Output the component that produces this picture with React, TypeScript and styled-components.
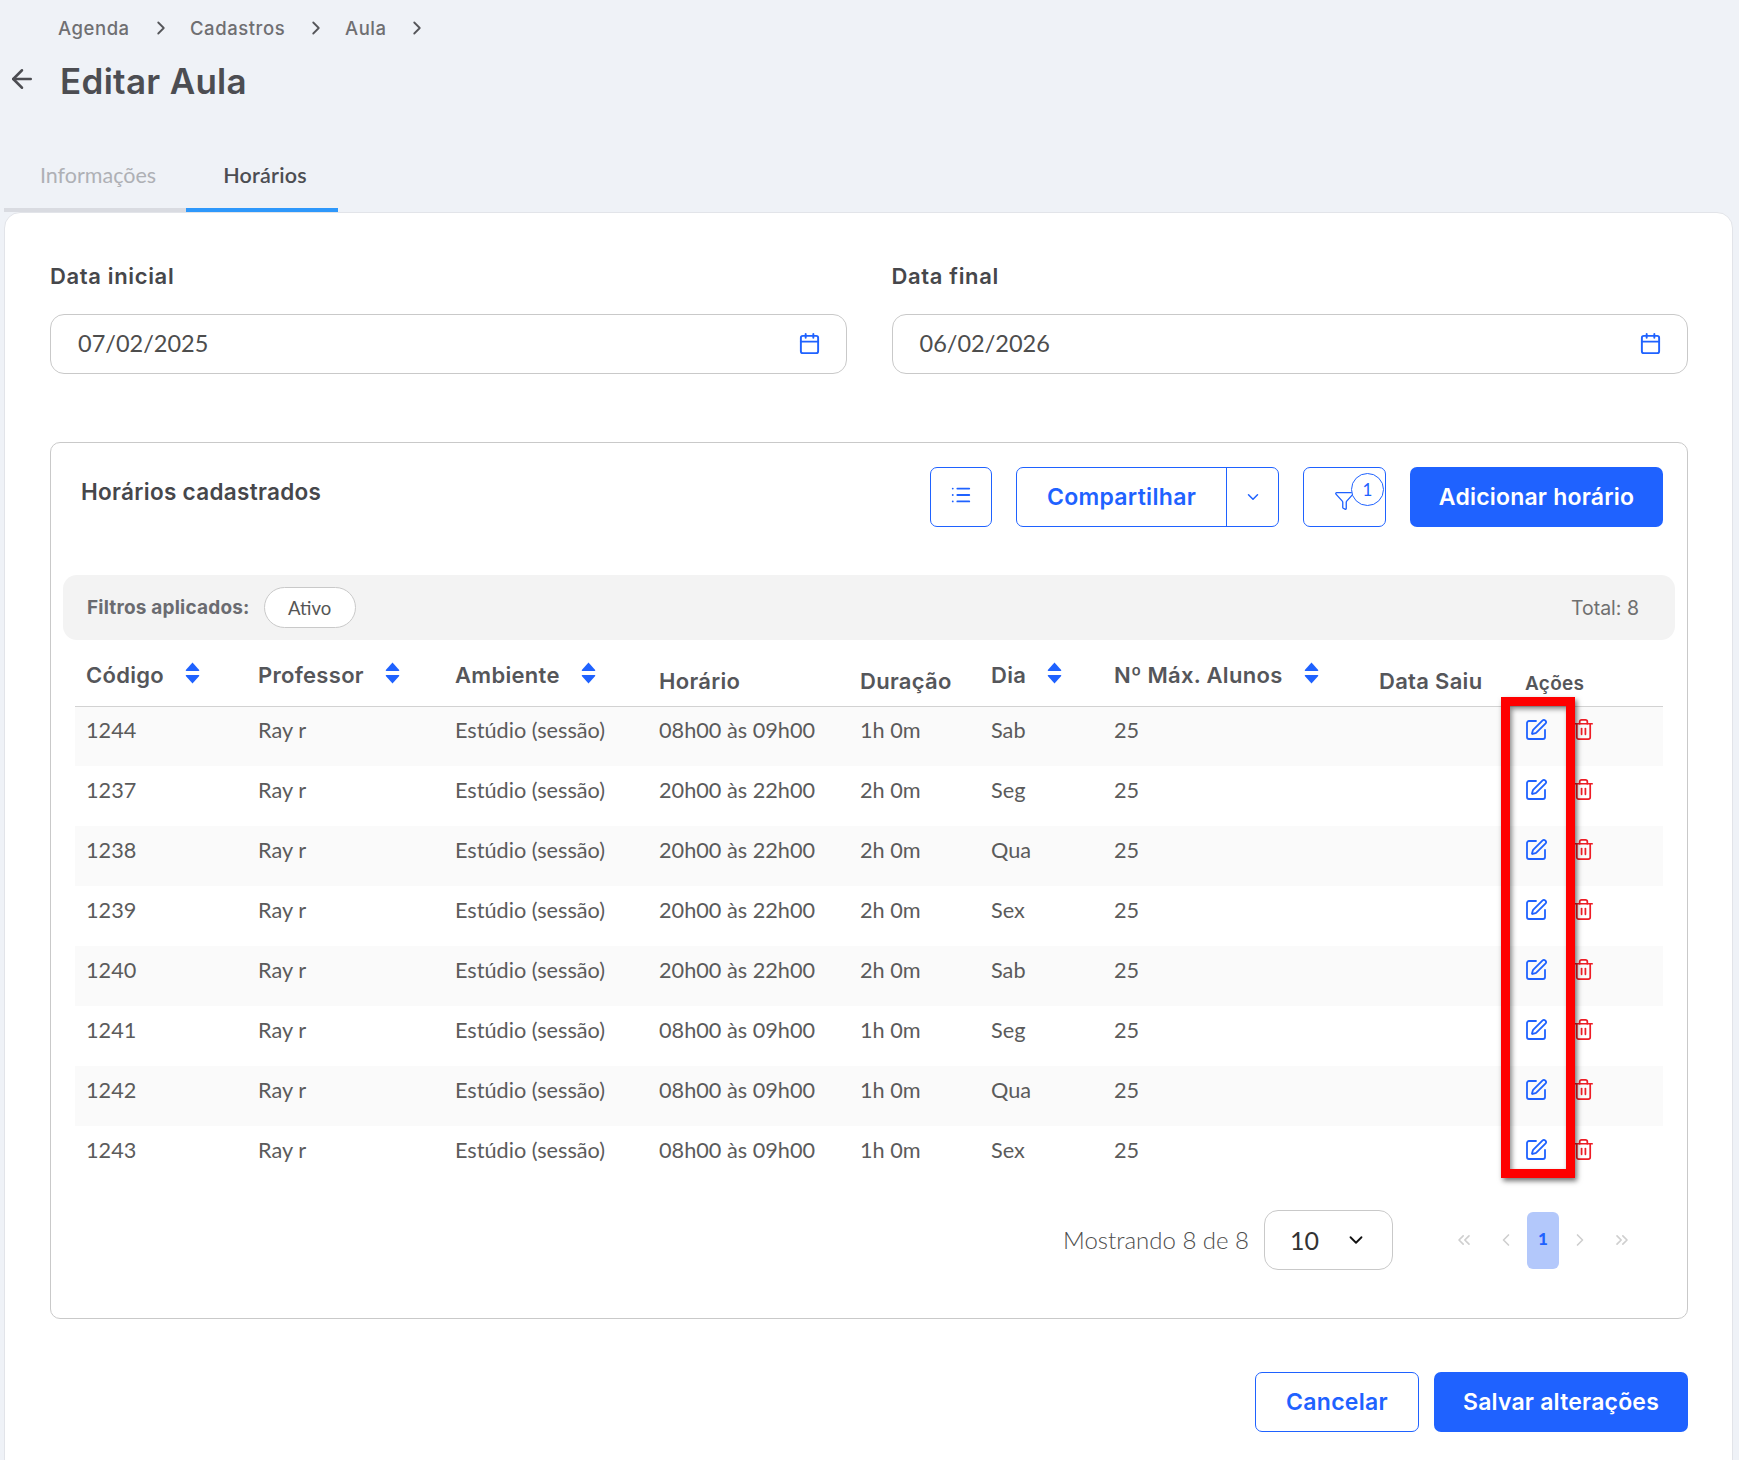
import React from 'react'
import styled, { createGlobalStyle } from 'styled-components'
import {
  ArrowLeft,
  Calendar,
  ChevronDown,
  ChevronLeft,
  ChevronRight,
  ChevronsLeft,
  ChevronsRight,
  Funnel,
  List,
  SquarePen,
  Trash2,
} from 'lucide-react'

const BLUE = '#1f62ff'
const HEAD_FONT = '"Inter", "Liberation Sans", sans-serif'
const BODY_FONT = '"Lato", "Liberation Sans", sans-serif'

const GlobalStyle = createGlobalStyle`
  * { box-sizing: border-box; }
  html, body { margin: 0; padding: 0; background: #eff2f7; }
  body { font-family: ${BODY_FONT}; }
`

const Page = styled.div`
  width: 1739px;
  height: 1460px;
  overflow: hidden;
  background: #eff2f7;
`

const Breadcrumb = styled.nav`
  display: flex;
  align-items: center;
  height: 28px;
  margin-top: 14px;
  padding-left: 58px;
  font-family: ${HEAD_FONT};
  font-size: 18.5px;
  font-weight: 500;
  letter-spacing: 0.55px;
  color: #6f6f72;
`

const Crumb = styled.span`
  display: inline-block;
  width: ${(p: { $w: number }) => p.$w}px;
`

const CrumbArrow = styled(ChevronRight)`
  width: 22px;
  height: 22px;
  margin-left: -6px;
  margin-right: 18px;
  color: #55565a;
`

const TitleRow = styled.div`
  display: flex;
  align-items: center;
  height: 44px;
  margin-top: 17px;
  padding-left: 7px;
`

const BackArrow = styled(ArrowLeft)`
  width: 30px;
  height: 30px;
  margin-top: -4px;
  margin-right: 23px;
  color: #4c4d52;
`

const Title = styled.h1`
  margin: 0;
  font-family: ${HEAD_FONT};
  font-size: 35px;
  font-weight: 600;
  letter-spacing: 0.3px;
  color: #4c4d52;
`

const Tabs = styled.div`
  display: flex;
  margin-top: 45px;
  margin-left: 4px;
  height: 64px;
`

const Tab = styled.div<{ $active?: boolean; $w: number }>`
  display: flex;
  align-items: center;
  justify-content: center;
  width: ${(p) => p.$w}px;
  padding: 0 0 6px 6px;
  font-size: 21.5px;
  font-weight: ${(p) => (p.$active ? 600 : 400)};
  letter-spacing: ${(p) => (p.$active ? 0.2 : 0)}px;
  color: ${(p) => (p.$active ? '#4c4d52' : '#aeb0b5')};
  border-bottom: 4px solid ${(p) => (p.$active ? '#2e98fb' : '#d9dbe1')};
`

const Card = styled.main`
  width: 1729px;
  height: 1300px;
  margin-left: 4px;
  padding: 50px 44px 0 45px;
  background: #fff;
  border: 1px solid #e2e4e9;
  border-radius: 16px 16px 0 0;
`

const DateGrid = styled.div`
  display: grid;
  grid-template-columns: 1fr 1fr;
  gap: 45px;
`

const Field = styled.div`
  display: flex;
  flex-direction: column;
`

const FieldLabel = styled.label`
  height: 28px;
  margin-bottom: 23px;
  font-family: ${HEAD_FONT};
  font-size: 22px;
  font-weight: 600;
  letter-spacing: 0.65px;
  line-height: 26px;
  color: #46474b;
`

const DateInput = styled.div`
  display: flex;
  align-items: center;
  justify-content: space-between;
  height: 60px;
  padding: 0 25px 2px 27px;
  border: 1px solid #c9c9c9;
  border-radius: 14px;
  font-size: 23.5px;
  color: #4d4d4d;
`

const CalendarIcon = styled(Calendar)`
  width: 23px;
  height: 23px;
  color: ${BLUE};
`

const Panel = styled.section`
  position: relative;
  display: flex;
  flex-direction: column;
  height: 877px;
  margin-top: 68px;
  border: 1px solid #c9c9c9;
  border-radius: 10px;
`

const Toolbar = styled.div`
  display: flex;
  align-items: flex-start;
  padding: 24px 24px 0 30px;
`

const PanelTitle = styled.h2`
  flex: 1;
  margin: 10px 0 0;
  font-family: ${HEAD_FONT};
  font-size: 22.5px;
  font-weight: 600;
  letter-spacing: 0.3px;
  line-height: 30px;
  color: #46474b;
`

const OutlineButton = styled.button<{ $w: number; $ml?: number }>`
  position: relative;
  display: flex;
  align-items: center;
  justify-content: center;
  width: ${(p) => p.$w}px;
  height: 60px;
  margin-left: ${(p) => p.$ml || 0}px;
  padding: 0;
  background: #fff;
  border: 1px solid ${BLUE};
  border-radius: 7px;
  color: ${BLUE};
  font-family: ${HEAD_FONT};
  font-size: 23px;
  font-weight: 600;
  letter-spacing: 0.3px;
`

const ListIcon = styled(List)`
  width: 22px;
  height: 22px;
  margin-top: -4px;
`

const SplitMain = styled.span`
  display: flex;
  align-items: center;
  justify-content: center;
  width: 210px;
  height: 100%;
  border-right: 1px solid ${BLUE};
`

const SplitCaret = styled.span`
  display: flex;
  align-items: center;
  justify-content: center;
  flex: 1;
`

const SmallChevron = styled(ChevronDown)`
  width: 18px;
  height: 18px;
`

const FunnelIcon = styled(Funnel)`
  width: 21px;
  height: 21px;
  margin-top: 6px;
  stroke-width: 1.5;
`

const FilterBadge = styled.span`
  position: absolute;
  top: 5px;
  right: 1px;
  display: flex;
  align-items: center;
  justify-content: center;
  width: 33px;
  height: 33px;
  background: #fff;
  border: 1px solid ${BLUE};
  border-radius: 50%;
  font-family: ${BODY_FONT};
  font-size: 17px;
  font-weight: 400;
`

const PrimaryButton = styled.button<{ $w: number; $ml: number }>`
  width: ${(p) => p.$w}px;
  height: 60px;
  margin-left: ${(p) => p.$ml}px;
  padding: 0;
  background: ${BLUE};
  border: 0;
  border-radius: 7px;
  color: #fff;
  font-family: ${HEAD_FONT};
  font-size: 23px;
  font-weight: 600;
  letter-spacing: 0.2px;
`

const FilterBar = styled.div`
  display: flex;
  align-items: center;
  height: 65px;
  margin: 48px 12px 0;
  padding: 0 36px 0 24px;
  background: #f3f3f3;
  border-radius: 14px;
`

const FilterLabel = styled.span`
  margin-right: 14px;
  font-family: ${HEAD_FONT};
  font-size: 19px;
  font-weight: 700;
  letter-spacing: 0.2px;
  color: #6a6b70;
`

const Chip = styled.span`
  display: flex;
  align-items: center;
  justify-content: center;
  width: 92px;
  height: 41px;
  background: #fff;
  border: 1px solid #c9c9c9;
  border-radius: 21px;
  font-size: 18.5px;
  color: #555;
`

const Total = styled.span`
  margin-left: auto;
  font-family: ${HEAD_FONT};
  font-size: 19.5px;
  color: #6f6f6f;
`

const Table = styled.table`
  width: 1588px;
  margin: 0 24px;
  table-layout: fixed;
  border-collapse: collapse;
`

const HeadRow = styled.tr`
  height: 66px;
  border-bottom: 1px solid #d2d2d2;
`

const Th = styled.th<{ $sorted?: boolean; $small?: boolean }>`
  padding: 0 0 ${(p) => (p.$sorted ? 17 : p.$small ? 8 : 11)}px 11px;
  vertical-align: bottom;
  text-align: left;
  font-family: ${HEAD_FONT};
  font-size: ${(p) => (p.$small ? 19 : 22)}px;
  font-weight: 600;
  letter-spacing: 0.3px;
  line-height: 28px;
  color: #55565a;
  white-space: nowrap;
`

const SortWrap = styled.span`
  display: inline-flex;
  align-items: center;
`

const SortSvg = styled.svg`
  width: 15px;
  height: 22px;
  margin-left: 21px;
  margin-top: -4px;
  fill: ${BLUE};
`

const Tr = styled.tr`
  height: 60px;
  &:nth-child(odd) {
    background: #fafafa;
  }
`

const Td = styled.td`
  padding: 0 0 13px 11px;
  font-size: 21.7px;
  font-weight: 400;
  color: #5b5b5b;
  white-space: nowrap;
`

const Actions = styled.div`
  display: flex;
  align-items: center;
  margin-left: -1px;
`

const EditIcon = styled(SquarePen)`
  width: 24px;
  height: 24px;
  color: ${BLUE};
  stroke-width: 1.8;
`

const TrashIcon = styled(Trash2)`
  width: 23px;
  height: 23px;
  margin-left: 24px;
  color: #ee1c25;
  stroke-width: 1.8;
`

const Highlight = styled.div`
  position: absolute;
  top: 254px;
  left: 1450px;
  width: 74px;
  height: 481px;
  border: 9px solid #fe0000;
  box-shadow: 2px 3px 5px rgba(0, 0, 0, 0.55), inset 2px 3px 5px rgba(0, 0, 0, 0.45);
  pointer-events: none;
`

const Pagination = styled.div`
  display: flex;
  align-items: flex-start;
  justify-content: flex-end;
  margin-top: 24px;
  padding-right: 44px;
`

const Showing = styled.span`
  margin-right: 15px;
  font-size: 24px;
  font-weight: 300;
  line-height: 60px;
  color: #4d4d4d;
`

const SizeSelect = styled.div`
  display: flex;
  align-items: center;
  justify-content: space-between;
  width: 129px;
  height: 60px;
  padding: 0 25px 0 25px;
  border: 1px solid #c9c9c9;
  border-radius: 14px;
  font-size: 25px;
  color: #333;
`

const Pager = styled.div`
  display: flex;
  align-items: center;
  height: 60px;
  margin-left: 50px;
`

const PageArrow = styled.span`
  display: flex;
  align-items: center;
  justify-content: center;
  width: 42px;
  color: #cfcfcf;
`

const PageCurrent = styled.span`
  display: flex;
  align-items: center;
  justify-content: center;
  width: 32px;
  height: 57px;
  padding-bottom: 4px;
  background: #b3c8fb;
  border-radius: 6px;
  font-size: 17px;
  font-weight: 900;
  color: ${BLUE};
`

const Footer = styled.footer`
  display: flex;
  justify-content: flex-end;
  gap: 15px;
  margin-top: 53px;
`

const rows = [
  ['1244', '08h00 às 09h00', '1h 0m', 'Sab'],
  ['1237', '20h00 às 22h00', '2h 0m', 'Seg'],
  ['1238', '20h00 às 22h00', '2h 0m', 'Qua'],
  ['1239', '20h00 às 22h00', '2h 0m', 'Sex'],
  ['1240', '20h00 às 22h00', '2h 0m', 'Sab'],
  ['1241', '08h00 às 09h00', '1h 0m', 'Seg'],
  ['1242', '08h00 às 09h00', '1h 0m', 'Qua'],
  ['1243', '08h00 às 09h00', '1h 0m', 'Sex'],
]

const colWidths = [172, 197, 204, 201, 131, 123, 265, 146, 149]

const SortIcon: React.FC = () => (
  <SortSvg viewBox="0 0 15 22">
    <path d="M7.5 0.5 L14.2 8 Q14.6 9 13.6 9 H1.4 Q0.4 9 0.8 8 Z" />
    <path d="M1.4 13 H13.6 Q14.6 13 14.2 14 L7.5 21.5 L0.8 14 Q0.4 13 1.4 13 Z" />
  </SortSvg>
)

const SortableTh: React.FC<{ label: string }> = ({ label }) => (
  <Th $sorted>
    <SortWrap>
      {label}
      <SortIcon />
    </SortWrap>
  </Th>
)

const App: React.FC = () => {
  return (
    <Page>
      <GlobalStyle />
      <Breadcrumb>
        <Crumb $w={98}>Agenda</Crumb>
        <CrumbArrow />
        <Crumb $w={121}>Cadastros</Crumb>
        <CrumbArrow />
        <Crumb $w={67}>Aula</Crumb>
        <CrumbArrow />
      </Breadcrumb>
      <TitleRow>
        <BackArrow />
        <Title>Editar Aula</Title>
      </TitleRow>
      <Tabs>
        <Tab $w={182}>Informações</Tab>
        <Tab $w={152} $active>Horários</Tab>
      </Tabs>
      <Card>
        <DateGrid>
          <Field>
            <FieldLabel>Data inicial</FieldLabel>
            <DateInput>
              07/02/2025
              <CalendarIcon />
            </DateInput>
          </Field>
          <Field>
            <FieldLabel>Data final</FieldLabel>
            <DateInput>
              06/02/2026
              <CalendarIcon />
            </DateInput>
          </Field>
        </DateGrid>
        <Panel>
          <Toolbar>
            <PanelTitle>Horários cadastrados</PanelTitle>
            <OutlineButton $w={62}>
              <ListIcon />
            </OutlineButton>
            <OutlineButton $w={263} $ml={24}>
              <SplitMain>Compartilhar</SplitMain>
              <SplitCaret>
                <SmallChevron />
              </SplitCaret>
            </OutlineButton>
            <OutlineButton $w={83} $ml={24}>
              <FunnelIcon />
              <FilterBadge>1</FilterBadge>
            </OutlineButton>
            <PrimaryButton $w={253} $ml={24}>Adicionar horário</PrimaryButton>
          </Toolbar>
          <FilterBar>
            <FilterLabel>Filtros aplicados:</FilterLabel>
            <Chip>Ativo</Chip>
            <Total>Total: 8</Total>
          </FilterBar>
          <Table>
            <colgroup>
              {colWidths.map((w, i) => (
                <col key={i} style={{ width: w }} />
              ))}
            </colgroup>
            <thead>
              <HeadRow>
                <SortableTh label="Código" />
                <SortableTh label="Professor" />
                <SortableTh label="Ambiente" />
                <Th>Horário</Th>
                <Th>Duração</Th>
                <SortableTh label="Dia" />
                <SortableTh label="Nº Máx. Alunos" />
                <Th>Data Saiu</Th>
                <Th $small>Ações</Th>
              </HeadRow>
            </thead>
            <tbody>
              {rows.map((r) => (
                <Tr key={r[0]}>
                  <Td>{r[0]}</Td>
                  <Td>Ray r</Td>
                  <Td>Estúdio (sessão)</Td>
                  <Td>{r[1]}</Td>
                  <Td>{r[2]}</Td>
                  <Td>{r[3]}</Td>
                  <Td>25</Td>
                  <Td />
                  <Td>
                    <Actions>
                      <EditIcon />
                      <TrashIcon />
                    </Actions>
                  </Td>
                </Tr>
              ))}
            </tbody>
          </Table>
          <Pagination>
            <Showing>Mostrando 8 de 8</Showing>
            <SizeSelect>
              10
              <ChevronDown size={22} color="#111" />
            </SizeSelect>
            <Pager>
              <PageArrow><ChevronsLeft size={20} /></PageArrow>
              <PageArrow><ChevronLeft size={20} /></PageArrow>
              <PageCurrent>1</PageCurrent>
              <PageArrow><ChevronRight size={20} /></PageArrow>
              <PageArrow><ChevronsRight size={20} /></PageArrow>
            </Pager>
          </Pagination>
          <Highlight />
        </Panel>
        <Footer>
          <OutlineButton $w={164}>Cancelar</OutlineButton>
          <PrimaryButton $w={254} $ml={0}>Salvar alterações</PrimaryButton>
        </Footer>
      </Card>
    </Page>
  )
}

export default App
